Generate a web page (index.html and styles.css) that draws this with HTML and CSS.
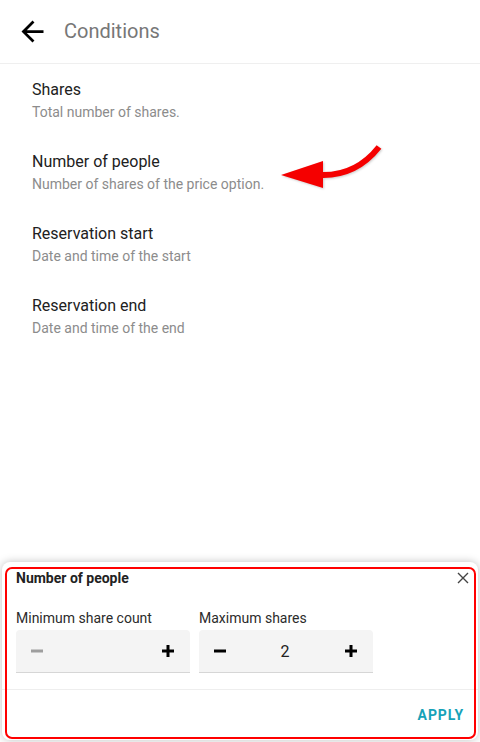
FILE: index.html
```html
<!DOCTYPE html>
<html lang="en">
<head>
    <meta charset="UTF-8">
    <meta name="viewport" content="width=device-width, initial-scale=1.0">
    <title>Conditions</title>
    <link rel="stylesheet" href="styles.css">
</head>
<body>
    <div class="page">
        <div class="top_bar">
            <svg class="back_icon" viewBox="0 0 24 24" width="33" height="33">
                <path d="M20 11H7.83l5.59-5.59L12 4l-8 8 8 8 1.41-1.41L7.83 13H20v-2z" fill="#000"/>
            </svg>
            <span class="top_title">Conditions</span>
        </div>

        <div class="list">
            <div class="item">
                <div class="item_title">Shares</div>
                <div class="item_sub">Total number of shares.</div>
            </div>
            <div class="item">
                <div class="item_title">Number of people</div>
                <div class="item_sub">Number of shares of the price option.</div>
            </div>
            <div class="item">
                <div class="item_title">Reservation start</div>
                <div class="item_sub">Date and time of the start</div>
            </div>
            <div class="item">
                <div class="item_title">Reservation end</div>
                <div class="item_sub">Date and time of the end</div>
            </div>

            <!-- annotation arrow -->
            <svg class="red_arrow" viewBox="0 0 120 60" width="120" height="60">
                <path d="M40 42 Q 75 43 98 14" stroke="#f50000" stroke-width="6" fill="none"/>
                <polygon points="0,42 42,28 42,55" fill="#f50000"/>
            </svg>
        </div>

        <div class="sheet">
            <div class="sheet_head">
                <span class="sheet_title">Number of people</span>
                <svg class="close_icon" viewBox="0 0 12 12" width="12" height="12">
                    <path d="M1 1L11 11M11 1L1 11" stroke="#444" stroke-width="1.4"/>
                </svg>
            </div>
            <div class="sheet_body">
                <div class="field">
                    <div class="field_label">Minimum share count</div>
                    <div class="stepper">
                        <div class="step_btn disabled">
                            <svg viewBox="0 0 12 12" width="12" height="12"><rect x="0" y="4.5" width="12" height="3" fill="#9e9e9e"/></svg>
                        </div>
                        <div class="step_val"></div>
                        <div class="step_btn">
                            <svg viewBox="0 0 12 12" width="12" height="12"><rect x="0" y="4.5" width="12" height="3" fill="#000"/><rect x="4.5" y="0" width="3" height="12" fill="#000"/></svg>
                        </div>
                    </div>
                </div>
                <div class="field">
                    <div class="field_label">Maximum shares</div>
                    <div class="stepper">
                        <div class="step_btn">
                            <svg viewBox="0 0 12 12" width="12" height="12"><rect x="0" y="4.5" width="12" height="3" fill="#000"/></svg>
                        </div>
                        <div class="step_val">2</div>
                        <div class="step_btn">
                            <svg viewBox="0 0 12 12" width="12" height="12"><rect x="0" y="4.5" width="12" height="3" fill="#000"/><rect x="4.5" y="0" width="3" height="12" fill="#000"/></svg>
                        </div>
                    </div>
                </div>
            </div>
            <div class="sheet_foot">
                <span class="apply_btn">APPLY</span>
            </div>
            <div class="red_mark"></div>
        </div>
    </div>
</body>
</html>
```

FILE: styles.css
```css
body{
    margin: 0;
    font-family: Roboto, "Liberation Sans", sans-serif;
    background-color: white;
}

.page{
    height: 742px;
    display: flex;
    flex-direction: column;
}

.top_bar{
    height: 63px;
    border-bottom: 1px solid #efefef;
    display: flex;
    align-items: center;
    flex-shrink: 0;
}

.back_icon{
    margin-left: 16px;
    margin-top: -1px;
}

.top_title{
    margin-left: 15px;
    font-size: 20px;
    color: #777;
    margin-top: -1px;
}

.list{
    flex: 1;
    position: relative;
}

.item{
    padding: 14px 32px 14px;
}

.item_title{
    font-size: 16px;
    line-height: 24px;
    color: #212121;
}

.item_sub{
    font-size: 14px;
    line-height: 20px;
    color: #8c8c8c;
}

.red_arrow{
    position: absolute;
    left: 281px;
    top: 69px;
    filter: drop-shadow(1px 1px 1px rgba(0,0,0,0.2));
}

.sheet{
    position: relative;
    margin: 0 2px 2px;
    background-color: white;
    border-radius: 8px;
    box-shadow: 0 0 8px rgba(0,0,0,0.25);
    flex-shrink: 0;
}

.sheet_head{
    padding: 6px 9px 0 14px;
    height: 20px;
    display: flex;
    justify-content: space-between;
    align-items: center;
}

.sheet_title{
    font-size: 14px;
    font-weight: bold;
    color: #222;
    line-height: 20px;
}

.sheet_body{
    display: flex;
    gap: 9px;
    padding: 20px 14px 16px;
}

.field{
    width: 174px;
}

.field_label{
    font-size: 14px;
    line-height: 20px;
    color: #2b2b2b;
}

.stepper{
    margin-top: 2px;
    height: 42px;
    background-color: #f4f4f4;
    border-bottom: 1px solid #d6d6d6;
    border-radius: 4px 4px 0 0;
    display: flex;
    align-items: center;
}

.step_btn{
    width: 42px;
    height: 42px;
    display: flex;
    justify-content: center;
    align-items: center;
}

.step_btn:last-child{
    width: 44px;
}

.step_val{
    flex: 1;
    text-align: center;
    font-size: 16px;
    color: #212121;
}

.sheet_foot{
    border-top: 1px solid #eee;
    padding: 15px 14px 15px;
    text-align: right;
    line-height: 20px;
}

.apply_btn{
    font-size: 14px;
    font-weight: bold;
    letter-spacing: 0.9px;
    color: #17a2b8;
}

.red_mark{
    position: absolute;
    top: 5px;
    left: 3px;
    right: 2px;
    bottom: 1px;
    border: 2px solid #f00;
    border-radius: 7px;
    pointer-events: none;
}
```
